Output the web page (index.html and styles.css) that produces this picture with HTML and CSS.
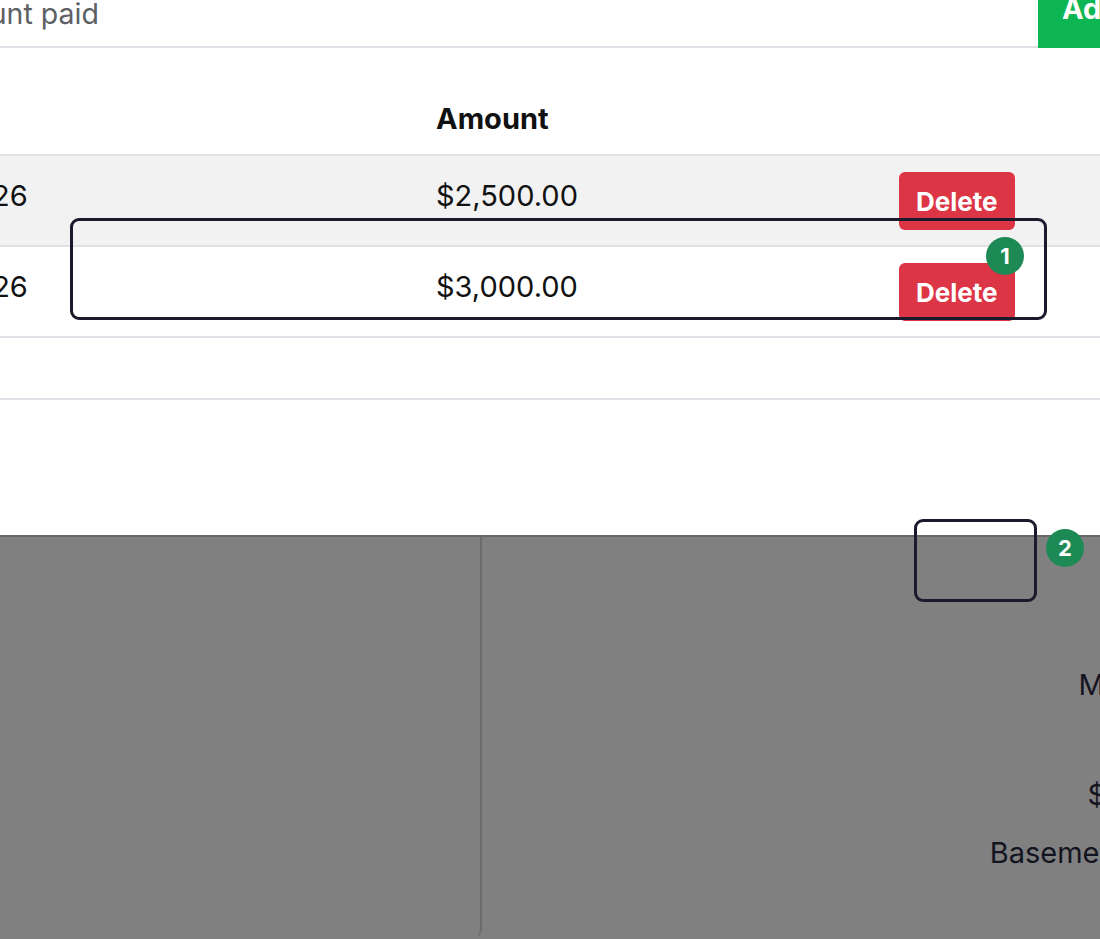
FILE: index.html
```html
<!DOCTYPE html>
<html lang="en">
<head>
    <meta charset="UTF-8">
    <title>Payments</title>
    <link rel="stylesheet" href="styles.css">
</head>
<body>
    <div class="screen">
        <div class="modal">
            <form class="add-form">
                <input type="text" class="amount-input" placeholder="Amount paid">
                <button type="button" class="btn-add">Add</button>
            </form>

            <table class="payments">
                <colgroup>
                    <col class="col-date">
                    <col class="col-amount">
                    <col class="col-action">
                </colgroup>
                <thead>
                    <tr><th>Date</th><th>Amount</th><th></th></tr>
                </thead>
                <tbody>
                    <tr class="striped">
                        <td>02/01/2026</td>
                        <td>$2,500.00</td>
                        <td><button type="button" class="btn-delete">Delete</button></td>
                    </tr>
                    <tr>
                        <td>03/01/2026</td>
                        <td>$3,000.00</td>
                        <td><button type="button" class="btn-delete">Delete</button></td>
                    </tr>
                </tbody>
                <tfoot>
                    <tr><td colspan="3"></td></tr>
                </tfoot>
            </table>
        </div>

        <!-- page behind the modal, dimmed -->
        <div class="backdrop-area">
            <div class="card-left"></div>
            <div class="card-right">
                <p class="unit-name">Monthly</p>
                <p class="unit-rent">$1,200</p>
                <p class="unit-place">Basement Apartment</p>
            </div>
        </div>

        <!-- annotation markers -->
        <div class="mark mark-1"></div>
        <span class="badge badge-1">1</span>
        <div class="mark mark-2"></div>
        <span class="badge badge-2">2</span>
    </div>
</body>
</html>
```

FILE: styles.css
```css
body {
    margin: 0;
    padding: 0;
    font-family: Inter, "Liberation Sans", sans-serif;
    color: #111;
    background: #fff;
}

.screen {
    position: relative;
    width: 1100px;
    height: 939px;
    overflow: hidden;
}

/* 모달 영역 */
.modal {
    margin-left: -200px;
    margin-top: -16px;
    width: 1500px;
    height: 551px;
    background: #fff;
}

.add-form {
    display: flex;
    margin: 0;
    padding-left: 116px;
    height: 64px;
}

.amount-input {
    width: 1122px;
    box-sizing: border-box;
    height: 64px;
    padding: 0 12px 4px;
    border: none;
    border-bottom: 2px solid #dee2e6;
    font-family: inherit;
    font-size: 28.5px;
    color: #222;
    outline: none;
}

.amount-input::placeholder {
    color: #5d6063;
}

.btn-add {
    height: 64px;
    padding: 0 24px 16px;
    border: none;
    background: #0db652;
    color: #fff;
    font-family: inherit;
    font-size: 29px;
    font-weight: 700;
}

.payments {
    margin-left: 60px;
    border-collapse: collapse;
    table-layout: fixed;
    width: 1400px;
    font-size: 29px;
}

.col-date { width: 567px; }
.col-amount { width: 463px; }

.payments th {
    height: 91px;
    padding: 0 0 15px 9px;
    text-align: left;
    vertical-align: bottom;
    font-weight: 700;
    line-height: 40px;
    border-bottom: 2px solid #dee2e6;
}

.payments td {
    padding: 16px 0 15px 9px;
    vertical-align: top;
    line-height: 47px;
    border-bottom: 2px solid #dee2e6;
}

.payments tr.striped td {
    background: #f2f2f2;
}

.payments tfoot td {
    height: 60px;
    padding: 0;
}

.btn-delete {
    display: inline-block;
    vertical-align: top;
    height: 58px;
    padding: 0 17px;
    border: none;
    border-radius: 6px;
    background: #dc3545;
    color: #fff;
    font-family: inherit;
    font-size: 26px;
    font-weight: 700;
}

/* 어둡게 덮인 뒤쪽 페이지 */
.backdrop-area {
    display: flex;
    height: 402px;
    background: #808080;
    border-top: 2px solid #676767;
}

.card-left {
    margin-left: -200px;
    width: 680px;
    height: 400px;
    border-right: 2px solid #6b6b6b;
    border-bottom-right-radius: 8px;
    flex-shrink: 0;
}

.card-right {
    display: flex;
    flex-direction: column;
    align-items: center;
    width: 1304px;
    flex-shrink: 0;
    font-size: 29px;
    color: #141420;
}

.card-right p {
    margin: 0;
    line-height: 36px;
    white-space: nowrap;
}

.unit-name { margin-top: 130px !important; }
.unit-rent { margin-top: 74px !important; }
.unit-place { margin-top: 22px !important; }

/* 주석 표시 */
.mark {
    position: absolute;
    border: 3px solid #1b1a2c;
    border-radius: 9px;
    box-sizing: border-box;
}

.mark-1 {
    left: 70px;
    top: 218px;
    width: 977px;
    height: 102px;
}

.mark-2 {
    left: 914px;
    top: 519px;
    width: 123px;
    height: 83px;
}

.badge {
    position: absolute;
    width: 38px;
    height: 38px;
    border-radius: 50%;
    background: #1d8a55;
    color: #fff;
    font-size: 22px;
    font-weight: 700;
    line-height: 38px;
    text-align: center;
}

.badge-1 { left: 986px; top: 237px; }
.badge-2 { left: 1046px; top: 529px; }
```
